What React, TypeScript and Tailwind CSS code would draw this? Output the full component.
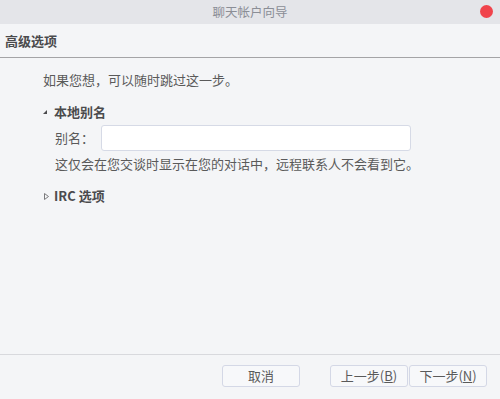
export default function App() {
  const font = { fontFamily: '"Noto Sans CJK SC", "Noto Sans", sans-serif' };

  return (
    <div
      className="w-[500px] h-[399px] flex flex-col bg-[#f4f5f7] text-[#5a5a5a] overflow-hidden"
      style={font}
    >
      <div className="relative h-[24px] shrink-0 flex items-center justify-center bg-[#e4e5e9]">
        <span className="text-[12.5px] text-[#8b8e96] leading-none">聊天帐户向导</span>
        <span className="absolute right-[7px] top-[5px] w-[13px] h-[13px] rounded-full bg-[#f0444c]" />
      </div>

      <div className="h-[34px] shrink-0 flex items-center px-[5px] border-b border-[#a4a4a6]">
        <span className="text-[13px] font-bold text-[#4b4b4d]">高级选项</span>
      </div>

      <div className="flex-1 pl-[43px] pt-[13px] text-[13px] leading-[18px]">
        <div>如果您想，可以随时跳过这一步。</div>

        <div className="mt-[14px] flex items-center">
          <span className="w-[11px] flex items-center">
            <svg width="4" height="4" viewBox="0 0 4 4">
              <polygon points="4,0 4,4 0,4" fill="#4b4b4d" />
            </svg>
          </span>
          <span className="font-bold text-[#4b4b4d]">本地别名</span>
        </div>

        <div className="pl-[12px]">
          <div className="mt-[4px] flex items-center">
            <span className="w-[46px]">别名：</span>
            <input
              className="w-[310px] h-[26px] bg-white border border-[#d6dae6] rounded-[3px] outline-none px-2"
              style={font}
            />
          </div>
          <div className="mt-[4px]">这仅会在您交谈时显示在您的对话中，远程联系人不会看到它。</div>
        </div>

        <div className="mt-[14px] flex items-center">
          <span className="w-[11px] flex items-center pl-[1px]">
            <svg width="5" height="7" viewBox="0 0 5 7">
              <polygon points="0.5,0.5 4.5,3.5 0.5,6.5" fill="none" stroke="#7a7a7c" strokeWidth="1" />
            </svg>
          </span>
          <span className="font-bold text-[#4b4b4d]">IRC 选项</span>
        </div>
      </div>

      <div className="h-[45px] shrink-0 border-t border-[#d8d9dd] flex items-start justify-end pt-[10px] pr-[13px] text-[13px]">
        <button className="w-[78px] h-[22px] flex items-center justify-center bg-[#f7f8fa] border border-[#d4d8e6] rounded-[3px]">
          取消
        </button>
        <button className="ml-[30px] w-[78px] h-[22px] flex items-center justify-center bg-[#f7f8fa] border border-[#d4d8e6] rounded-[3px]">
          上一步(<span className="underline">B</span>)
        </button>
        <button className="ml-[1px] w-[78px] h-[22px] flex items-center justify-center bg-[#f7f8fa] border border-[#d4d8e6] rounded-[3px]">
          下一步(<span className="underline">N</span>)
        </button>
      </div>
    </div>
  );
}
